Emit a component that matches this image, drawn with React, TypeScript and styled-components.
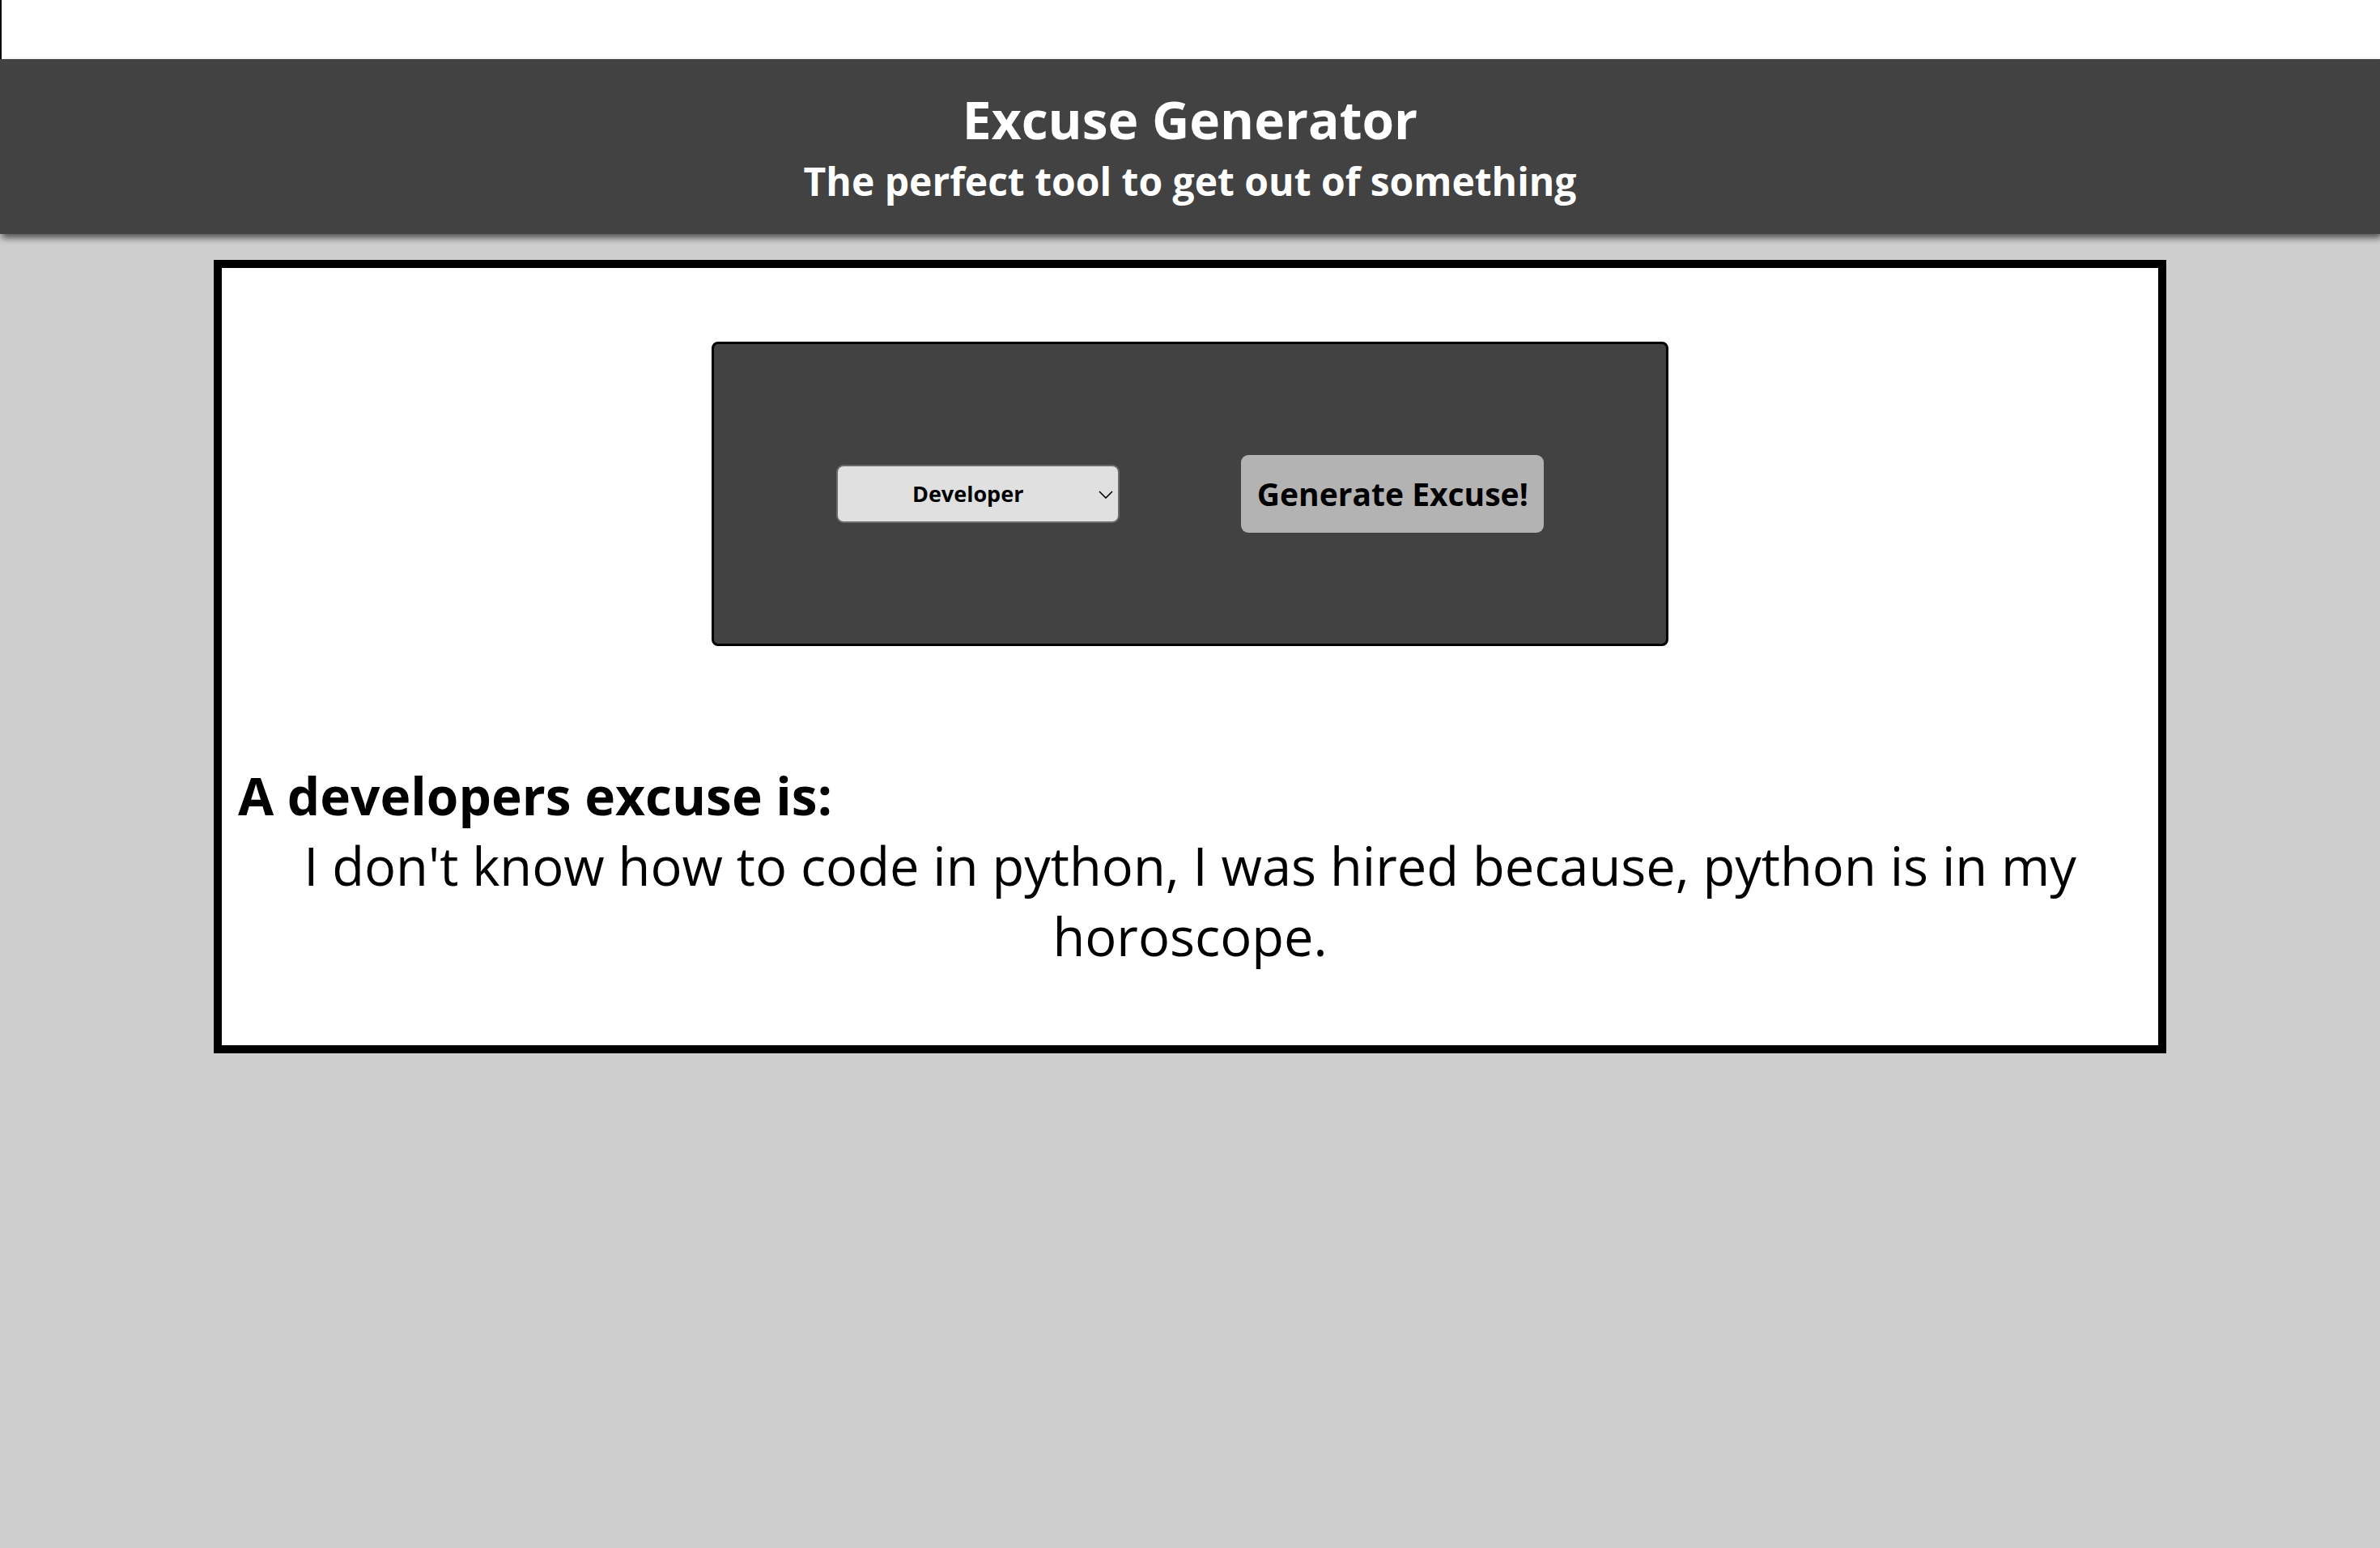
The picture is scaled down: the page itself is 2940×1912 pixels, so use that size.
import React from "react";
import styled, { createGlobalStyle } from "styled-components";

const GlobalStyle = createGlobalStyle`
  html, body {
    margin: 0;
    padding: 0;
    background: #cfcfcf;
    font-family: "Open Sans", "Noto Sans", sans-serif;
  }
  #root {
    min-height: 100vh;
  }
`;

const Page = styled.div`
  min-height: 100vh;
  background: #cfcfcf;
  display: flex;
  flex-direction: column;
`;

const TopStrip = styled.div`
  height: 73px;
  background: #ffffff;
  border-left: 2px solid #000000;
  box-sizing: border-box;
`;

const Header = styled.header`
  background: #424242;
  color: #ffffff;
  text-align: center;
  padding: 31px 0 32px;
  box-shadow: 2px 5px 8px rgba(0, 0, 0, 0.6);
  position: relative;
  z-index: 1;
`;

const Title = styled.h1`
  margin: 0;
  font-size: 64px;
  font-weight: 700;
  line-height: 1.362;
`;

const Subtitle = styled.h2`
  margin: 0;
  font-size: 48px;
  font-weight: 700;
  line-height: 1.362;
`;

const Main = styled.main`
  padding-top: 32px;
  display: flex;
  justify-content: center;
`;

const Card = styled.section`
  width: 2412px;
  box-sizing: border-box;
  background: #ffffff;
  border: 10px solid #000000;
  padding: 91px 20px 91px;
  display: flex;
  flex-direction: column;
`;

const Panel = styled.div`
  width: 1182px;
  height: 376px;
  box-sizing: border-box;
  margin: 0 auto;
  background: #424242;
  border: 3px solid #000000;
  border-radius: 8px;
  display: flex;
  align-items: center;
  justify-content: space-evenly;
`;

const SelectWrap = styled.div`
  position: relative;
  width: 350px;
  height: 72px;
`;

const Select = styled.select`
  appearance: none;
  -webkit-appearance: none;
  width: 100%;
  height: 100%;
  box-sizing: border-box;
  background: #e0e0e0;
  border: 2px solid #6b6b6b;
  border-radius: 9px;
  padding: 0 28px 0 4px;
  font-family: "Open Sans", sans-serif;
  font-size: 27px;
  font-weight: 700;
  color: #000000;
  text-align: center;
  text-align-last: center;
  outline: none;
`;

const Chevron = styled.svg`
  position: absolute;
  right: 8px;
  top: 32px;
  width: 18px;
  height: 10px;
  pointer-events: none;
`;

const Button = styled.button`
  width: 374px;
  height: 96px;
  box-sizing: border-box;
  background: #b3b3b3;
  border: none;
  border-radius: 9px;
  font-family: "Open Sans", sans-serif;
  font-size: 39px;
  font-weight: 700;
  color: #000000;
  padding: 0;
  cursor: pointer;
`;

const Result = styled.div`
  margin-top: 141px;
  display: flex;
  flex-direction: column;
`;

const ResultHeading = styled.h3`
  margin: 0;
  font-size: 64px;
  font-weight: 700;
  line-height: 87px;
  text-align: left;
  color: #000000;
`;

const ExcuseText = styled.p`
  margin: 0;
  font-size: 65px;
  font-weight: 400;
  line-height: 87px;
  text-align: center;
  color: #000000;
`;

export default function App() {
  return (
    <Page>
      <GlobalStyle />
      <TopStrip />
      <Header>
        <Title>Excuse Generator</Title>
        <Subtitle>The perfect tool to get out of something</Subtitle>
      </Header>
      <Main>
        <Card>
          <Panel>
            <SelectWrap>
              <Select defaultValue="developer">
                <option value="family">Family</option>
                <option value="office">Office</option>
                <option value="children">Children</option>
                <option value="college">College</option>
                <option value="party">Party</option>
                <option value="developer">Developer</option>
              </Select>
              <Chevron viewBox="0 0 18 10" fill="none">
                <path d="M1 1 L9 9 L17 1" stroke="#000" strokeWidth="1.6" />
              </Chevron>
            </SelectWrap>
            <Button>Generate Excuse!</Button>
          </Panel>
          <Result>
            <ResultHeading>A developers excuse is:</ResultHeading>
            <ExcuseText>
              I don't know how to code in python, I was hired because, python is in my horoscope.
            </ExcuseText>
          </Result>
        </Card>
      </Main>
    </Page>
  );
}
